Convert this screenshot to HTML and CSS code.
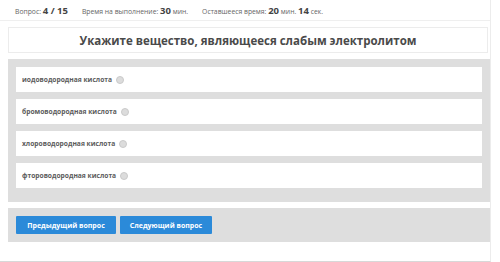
FILE: index.html
```html
<!DOCTYPE html>
<html lang="ru">
<head>
    <meta charset="UTF-8">
    <title>Тест</title>
    <link rel="stylesheet" href="styles.css">
</head>
<body>
    <div class="page">
        <!-- Info bar -->
        <div class="info-bar">
            <span class="info">Вопрос: <b>4 / 15</b></span>
            <span class="info">Время на выполнение: <b>30</b> мин.</span>
            <span class="info">Оставшееся время: <b>20</b> мин. <b>14</b> сек.</span>
        </div>

        <!-- Question -->
        <div class="question">Укажите вещество, являющееся слабым электролитом</div>

        <!-- Answers -->
        <div class="answers">
            <label class="answer">иодоводородная кислота<span class="radio"></span></label>
            <label class="answer">бромоводородная кислота<span class="radio"></span></label>
            <label class="answer">хлороводородная кислота<span class="radio"></span></label>
            <label class="answer">фтороводородная кислота<span class="radio"></span></label>
        </div>

        <!-- Navigation -->
        <div class="nav">
            <button class="btn btn-prev">Предыдущий вопрос</button>
            <button class="btn btn-next">Следующий вопрос</button>
        </div>
    </div>
</body>
</html>
```

FILE: styles.css
```css
* {
    margin: 0;
    padding: 0;
    box-sizing: border-box;
}

body {
    width: 500px;
    height: 262px;
    overflow: hidden;
    font-family: 'Open Sans', sans-serif;
    background: #fff;
}

.page {
    width: 491px;
    height: 262px;
    border-right: 1px solid #ececec;
    border-bottom: 1px solid #d8d8d8;
}

/* Info bar */
.info-bar {
    height: 21px;
    display: flex;
    align-items: center;
    gap: 14px;
    padding-left: 15px;
    border-bottom: 1px solid #efefef;
    font-size: 6.8px;
    color: #666;
}

.info b {
    font-size: 9.5px;
    font-weight: 700;
    color: #444;
}

/* Question */
.question {
    margin: 6px 2px 6px 8px;
    height: 26px;
    border: 1px solid #ececec;
    display: flex;
    align-items: center;
    justify-content: center;
    font-size: 11.5px;
    font-weight: 700;
    color: #4a4a4a;
}

/* Answers */
.answers {
    margin-left: 8px;
    background: #dedede;
    padding: 8px 8px 14px;
    display: flex;
    flex-direction: column;
    gap: 7px;
}

.answer {
    height: 25px;
    background: #fff;
    display: flex;
    align-items: center;
    gap: 4px;
    padding-left: 6px;
    font-size: 6.7px;
    font-weight: 700;
    color: #5c5c5c;
}

.radio {
    width: 8px;
    height: 8px;
    border-radius: 50%;
    background: #dcdcdc;
    border: 1px solid #cacaca;
}

/* Navigation */
.nav {
    margin: 6px 0 0 8px;
    background: #dedede;
    padding: 8px;
    display: flex;
    gap: 4px;
}

.btn {
    height: 18px;
    border: none;
    border-radius: 1px;
    background: #2b8ad9;
    color: #fff;
    font-family: 'Open Sans', sans-serif;
    font-size: 7px;
    font-weight: 700;
}

.btn-prev {
    width: 100px;
}

.btn-next {
    width: 92px;
}
```
